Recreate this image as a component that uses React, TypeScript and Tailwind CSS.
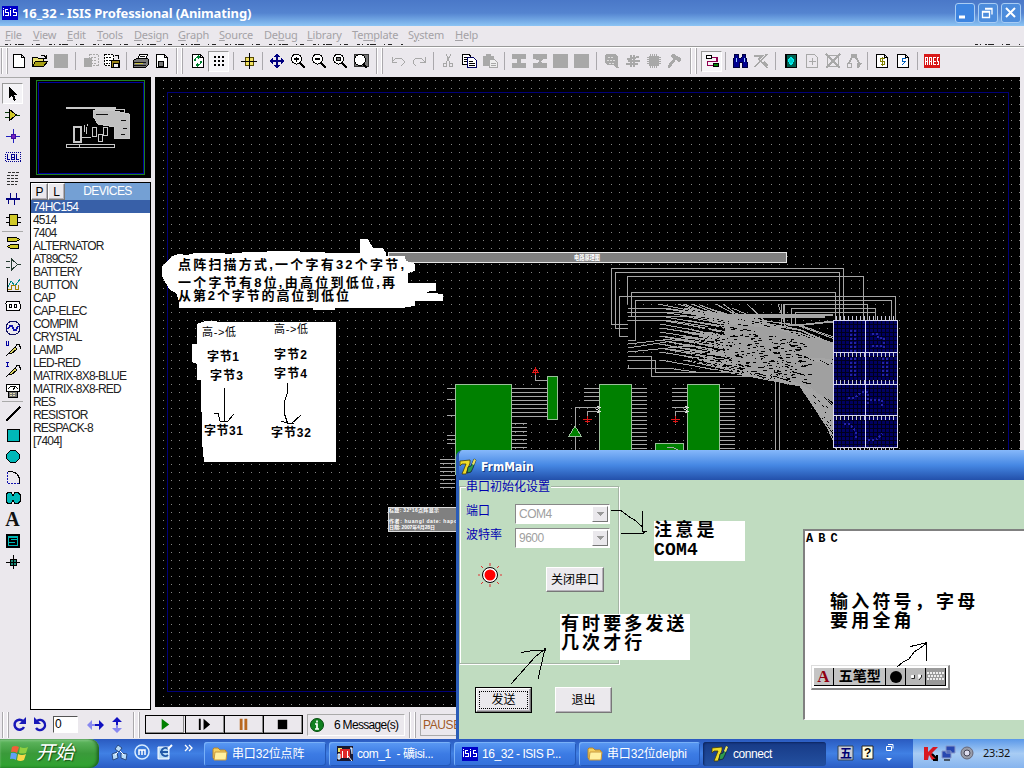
import type { ReactNode } from "react";

const UI = "font-['Noto_Sans','Noto_Sans_CJK_SC',sans-serif]";
const CJK = "font-['Liberation_Sans','Noto_Sans_CJK_SC',sans-serif]";

function Ic({ children, s = 16 }: { children: ReactNode; s?: number }) {
  return (
    <svg width={s} height={s} viewBox="0 0 16 16" fill="none" stroke="#000" shapeRendering="crispEdges" className="shrink-0">
      {children}
    </svg>
  );
}

/* ---------- toolbar glyphs ---------- */
const sheet = <path d="M2.5 1.5h8l3 3v10h-11zM10.5 1.5v3h3" fill="#fff" />;
const G = "#a8a8a8";
const icons: Record<string, ReactNode> = {
  new: <Ic>{sheet}</Ic>,
  open: <Ic><path d="M.5 13.5v-9h5l1 1h5v3" fill="#e8e070" /><path d="M.5 13.5l3-5h12l-4 5z" fill="#a8a018" /><path d="M9 2.5h3l2 2M14.5 2v3h-3" /></Ic>,
  save: <Ic><path d="M1 1h14v14H1z" fill={G} stroke="none" /></Ic>,
  imp: <Ic><path d="M6.5 1.5h9v11h-9zM8 4h6M8 7h6M8 10h6" stroke={G} strokeDasharray="2 1" /><path d="M1 5h8v9H1z" fill={G} stroke="none" /></Ic>,
  exp: <Ic><path d="M.5 1.5h9v11h-9z" fill="#fff" strokeDasharray="2 1" /><path d="M2 4h6M2 7h5M2 10h4" strokeDasharray="2 1" /><path d="M11 2h3v4" /><path d="M7.5 7.5h8v7h-8z" fill="#9a8418" /><path d="M9 10h5v4H9z" fill="#eee" /></Ic>,
  print: <Ic><path d="M4.5 6.5l2-5h8l-2 5" fill="#fff" /><path d="M.5 7.5l3-2h11l1 1v5l-3 3h-12z" fill="#777" /><path d="M1 9.5h12M1 12h12M7 3h5" stroke="#111" /><path d="M2 10.5h8" stroke="#c8c040" /></Ic>,
  pdoc: <Ic>{sheet}<path d="M4 8h5v5H4z" fill="#777" /></Ic>,
  refresh: <Ic>{sheet}<path d="M5 8V6l2-2h2M8 2l2 2-2 2M11 8v2l-2 2H7M8 10l-2 2 2 2" stroke="#008030" strokeWidth="1.2" /></Ic>,
  grid: <span className="flex h-[21px] w-[21px] items-center justify-center border border-b-white border-l-[#999] border-r-white border-t-[#999] bg-[#f6f5f8]"><Ic>{[3, 7, 11].map((y) => <path key={y} d={`M3 ${y + 1}h2M7 ${y + 1}h2M11 ${y + 1}h2`} strokeWidth="2" />)}</Ic></span>,
  origin: <Ic><path d="M8.500 0v16M0 8.500h16" /><path d="M4.500 4.500h8v8h-8z" stroke="#5a4c00" fill="#f0e060" /><path d="M8.500 4v9M4 8.500h9" /></Ic>,
  move: <Ic><path d="M8 0l3 4H9v3h3V5l4 3-4 3V9H9v3h2l-3 4-3-4h2V9H4v2L0 8l4-3v2h3V4H5z" fill="#000080" stroke="none" /><path d="M7 3h2v10H7zM3 7h10v2H3z" fill="#000080" stroke="none" /></Ic>,
  zin: <Ic><circle cx="6.500" cy="6" r="5" fill="#fff" /><path d="M4 6h5M6.500 3.500v5" strokeWidth="1.500" /><path d="M10 10l5 5" strokeWidth="2.500" /></Ic>,
  zout: <Ic><circle cx="6.500" cy="6" r="5" fill="#fff" /><path d="M4 6h5" strokeWidth="1.500" /><path d="M10 10l5 5" strokeWidth="2.500" /></Ic>,
  zall: <Ic><circle cx="6.500" cy="6" r="5" fill="#fff" /><path d="M4.500 4.500h4v3h-4z" fill="#777" /><path d="M10 10l5 5" strokeWidth="2.500" /></Ic>,
  zarea: <Ic><path d="M1 1h14v12H1z" fill="#777" stroke="#333" /><circle cx="7" cy="7" r="5.500" fill="#fff" /><path d="M10 11l4 4" strokeWidth="2.500" /></Ic>,
  undo: <Ic><path d="M2 4v5h5M2 9l4-4h5l3 3v2l-3 3" stroke={G} /></Ic>,
  redo: <Ic><path d="M14 4v5H9M14 9l-4-4H5L2 8v2l3 3" stroke={G} /></Ic>,
  cut: <Ic><path d="M6 1l4 9M11 1L6 10" stroke={G} /><circle cx="5" cy="12" r="2" stroke={G} /><circle cx="11" cy="12" r="2" stroke={G} /></Ic>,
  copy: <Ic><path d="M1.500 1.500h7l1 2v8h-8z" fill="#fff" /><path d="M3 4.500h4M3 6.500h4M3 8.500h3" /><path d="M6.500 4.500h6l3 3v7h-9z" fill="#fff" stroke="#000060" /><path d="M8 8.500h4M8 10.500h6M8 12.500h6" /></Ic>,
  paste: <Ic><path d="M1 3h3V1h5v2h3v10H1z" fill={G} stroke="none" /><path d="M7.500 6.500h5l3 3v5h-8z" fill="#eee" stroke={G} /><path d="M9 10.500h5M9 12.500h5" stroke={G} /></Ic>,
  b1: <Ic><path d="M1 1h14v5H10v4h5v5H1v-5h5V6H1z" fill={G} stroke="none" /></Ic>,
  b2: <Ic><path d="M1 1h14v5h-3l-4 3 4 1h3v5H1v-5h4l2-1V7L1 6z" fill={G} stroke="none" /></Ic>,
  b3: <Ic><path d="M0 1h15v14H0z" fill={G} stroke="none" /></Ic>,
  pick: <Ic><path d="M2 1h9l3 3v8l1 3h-3l-2-3H3L1 9V4z" fill={G} stroke="none" /><path d="M4 4.500h5M3 7.500h8M5 10.500h5" stroke="#ddd" strokeDasharray="2 1" /></Ic>,
  pin: <Ic><path d="M6 2v12M9 2v12M2 6l12-2M1 11h12M3 8h12" stroke={G} strokeWidth="2" /></Ic>,
  chip: <Ic><path d="M3 3h10v10H3z" fill={G} stroke="none" /><path d="M4.500 1v14M6.500 1v14M8.500 1v14M10.500 1v14M1 4.500h14M1 6.500h14M1 8.500h14M1 10.500h14" stroke={G} /></Ic>,
  ham: <Ic><path d="M6 1l8 5-2 3-3-3-7 9-1-2 6-7-3-3z" fill={G} stroke={G} /></Ic>,
  wire: <span className="flex h-[21px] w-[21px] items-center justify-center border border-b-white border-l-[#999] border-r-white border-t-[#999] bg-[#f6f5f8]"><Ic><path d="M7 4.500h6v4H3.500v4h6" stroke="#900050" strokeWidth="1.500" /><path d="M2.500 2.500h5v3h-5z" fill="#fff" /><path d="M9.500 10.500h5v3h-5z" fill="#008000" /></Ic></span>,
  find: <Ic><path d="M3 1h3v3l2 2 2-2V1h3l2 8v5h-5V9H7v5H1V9z" fill="#000090" stroke="#000040" /><path d="M4.500 5v4M12.500 5v4" stroke="#9cf" /></Ic>,
  tool: <Ic><path d="M1 3h8L6 6l8 9M14 1L2 14M11 9l4 4" stroke={G} strokeWidth="1.500" /></Ic>,
  des: <Ic><path d="M2.500 1.500h11v13h-11z" fill="#006050" /><path d="M8 4l3 4-3 4-3-4z" fill="#0cc" stroke="#0ee" /><path d="M3 1v14" strokeWidth="2" /></Ic>,
  add: <Ic><path d="M2.500 1.500h8l3 3v10h-11zM8.500 5v7M5 8.500h7" stroke={G} /></Ic>,
  del: <Ic><path d="M2.500 2.500h11v11h-11zM1 1l14 14M15 1L1 15" stroke={G} strokeWidth="1.500" /></Ic>,
  hier: <Ic><path d="M1.500 10.500h4v4h-4zM3 10l3-6h4l4 8M5 2h5v4M12 10v5M15 10l-3 5" stroke={G} strokeWidth="1.500" /></Ic>,
  bill: <Ic>{sheet}<path d="M10.500 5.500h-4v3h4v3h-4M8.500 4v9" stroke="#808000" /></Ic>,
  erc: <Ic>{sheet}<path d="M11 5.500H7.500v3h3l-4 4" stroke="#0060c0" /></Ic>,
  ares: <Ic><path d="M0 1h16v14H0z" fill="#d81818" stroke="none" /><path d="M1.500 12V4.500h2V12M1.500 8.500h2M5.500 12V4.500h2v4h-2M7.500 9v3M12 4.500H9.500v7H12M9.500 8.500H12M15 4.500h-1.500v4h1v3H13" stroke="#fff" /></Ic>,
};

const sep = (w: string) => <span className={`flex shrink-0 justify-center ${w}`}><span className="h-[18px] w-px bg-[#aaa8ac]" /></span>;
const grip = (w: string) => (
  <span className={`flex h-[26px] shrink-0 items-stretch justify-center ${w}`}>
    <span className="w-px bg-[#aaa8ac]" /><span className="w-px bg-white" />
    <span className="ml-[3px] w-px bg-white" /><span className="w-px bg-[#aaa8ac]" />
  </span>
);
function Cells({ names }: { names: string }) {
  return <>{names.split(" ").map((n, i) => <span key={i} className="flex w-[21px] shrink-0 justify-center">{icons[n]}</span>)}</>;
}

/* ---------- left mode icons ---------- */
const T = "#00b8b8";
const modes: ReactNode[] = [
  <span className="flex h-[21px] w-[21px] items-center justify-center border border-b-white border-l-[#999] border-r-white border-t-[#999] bg-[#f4f3f6]"><Ic><path d="M4 1v11l3-2 2 5 2-1-2-5h3z" fill="#000" stroke="none" /></Ic></span>,
  <Ic><path d="M4.500 2.500v11l7-5.500z" fill="#d0c828" /><path d="M0 5.500h4M0 10.500h4M11 8.500h4" stroke="#0a3a0a" /></Ic>,
  <Ic><path d="M8.500 1v14M1 8.500h14" stroke="#2020c0" /><path d="M6.500 6.500h4v4h-4z" fill="#7020c0" stroke="#4010a0" /></Ic>,
  <Ic><path d="M.5 3.500h15v9H.5z" stroke="#000090" strokeDasharray="1 1" /><path d="M2.500 5v5.500H5M6.500 5.500h3v5h-3zM7 8.500h2M11.500 5v5.500H14" stroke="#000090" /></Ic>,
  <Ic><path d="M3 2.500h11M2 5.500h12M2 8.500h11M2 11.500h12M2 14.500h10" stroke="#333" strokeDasharray="3 1" /></Ic>,
  <Ic><path d="M1 8h14" stroke="#000080" strokeWidth="2" /><path d="M5.500 2v6M11.500 2v6M3.500 8v5M9.500 8v6" stroke="#000080" /></Ic>,
  <Ic><path d="M4.500 2.500h8v11h-8z" fill="#d0c828" /><path d="M1 5.500h3M1 10.500h3M13 5.500h3M13 10.500h3" /></Ic>,
  null,
  <Ic><path d="M2.500 2.500h9l3 2-3 2h-9zM5.500 9.500h8v4h-8l-3-2z" fill="#d0c828" /></Ic>,
  <Ic><path d="M6.500 3v11l6-5.500zM1 5.500h4M1 11.500h4M13 8.500h3" stroke="#243a30" /></Ic>,
  <Ic><path d="M2.500 1v13.500H16" /><path d="M3 10l3-6 4 5 5-7" stroke="#088" /><path d="M3 12.500h3v-4h4v4h3v-5" stroke="#a08000" /></Ic>,
  <Ic><rect x="1" y="3.500" width="14" height="9" rx="2" fill="#fff" /><path d="M4.500 6.500h2v3h-2zM9.500 6.500h2v3h-2z" /></Ic>,
  <Ic><circle cx="8" cy="8" r="7" stroke="#101060" /><path d="M3 9l2-3h2l2 4h2l2-4" stroke="#1010b0" strokeWidth="1.500" /></Ic>,
  <Ic><path d="M1.500 0v4h2V0" stroke="#0000a0" /><path d="M1 15l4-4M8 10l4-7h2l2 5" /><path d="M4 12l6-6 2 2-6 5z" fill="#d8d060" /></Ic>,
  <Ic><path d="M1 .500h3M2.500 0v5M1 4.500h3" stroke="#0000a0" /><path d="M1 15l4-4M8 10l4-7h2l2 5" /><path d="M4 12l6-6 2 2-6 5z" fill="#d8d060" /></Ic>,
  <Ic><path d="M1.500 1.500h13v7h-13z" fill="#fff" /><path d="M3 6l3-3h4l3 3M8 7l2-3" /><path d="M3.500 8.500h9v6h-9z" fill="#777" /><path d="M5 10.500h6M5 12.500h6" stroke="#e8e0b0" strokeDasharray="2 1" /></Ic>,
  null,
  <Ic><path d="M1 15L15 1" strokeWidth="1.500" /></Ic>,
  <Ic><path d="M2.500 2.500h12v12h-12z" fill={T} /></Ic>,
  <Ic><path d="M5.500 2.500h5l4 4v4l-4 4h-5l-4-4v-4z" fill={T} /></Ic>,
  <Ic><path d="M2.500 2.500v12h12" stroke="#1010b0" strokeDasharray="2 1" /><path d="M3 2.500h4q7 2 7.500 8v4" /></Ic>,
  <Ic><path d="M1 4.500l2-2h3l2 3 2-3h3l2 2v7l-2 2h-3l-2-3-2 3H3l-2-2z" fill={T} /></Ic>,
  <span className="font-['Liberation_Serif',serif] text-[20px] font-bold leading-[20px] text-[#111]">A</span>,
  <Ic><path d="M2 2h12v12H2z" fill={T} strokeWidth="2" /><path d="M12 5.500H5V8h6v3H4" strokeWidth="1.500" /></Ic>,
  <Ic><path d="M8.500 1v14M1 8.500h14" /><path d="M5.500 5.500h6v6h-6z" fill="#1a8a78" /><path d="M8.500 5v7M5 8.500h7" /></Ic>,
];

const devices = ["74HC154", "4514", "7404", "ALTERNATOR", "AT89C52", "BATTERY", "BUTTON", "CAP", "CAP-ELEC", "COMPIM", "CRYSTAL", "LAMP", "LED-RED", "MATRIX-8X8-BLUE", "MATRIX-8X8-RED", "RES", "RESISTOR", "RESPACK-8", "[7404]"];

/* ---------- schematic ---------- */
const seq = (n: number, a: number, d: number) => Array.from({ length: n }, (_, i) => a + i * d);
const rnd = (i: number) => { const v = Math.sin(i * 127.1 + 11.7) * 43758.5453; return v - Math.floor(v); };
const W = "#a6a6a6";

function fan() {
  let d = "";
  for (let i = 0; i < 105; i++) {
    const row = i % 15;
    const x = 660 + Math.floor(rnd(i) * 4.2) * 24;
    const y = 308 + row * 4;
    const t = 336 + row * 4 + rnd(i + 400) * 24;
    const mid = Math.min(y * 0.4 + t * 0.6, 386);
    d += `M${x} ${y}L800 ${mid}L833 ${Math.min(t + (row > 9 ? 22 : 0), 436)}`;
  }
  return d;
}
function speckle() {
  let d = "";
  for (let i = 0; i < 330; i++) {
    const x = Math.round(690 + rnd(i + 900) * 118);
    const f = (x - 690) / 118;
    const y = Math.round(318 + f * 24 + rnd(i + 1900) * (48 - f * 6)) + 0.5;
    d += `M${x} ${y}h${1 + Math.floor(rnd(i + 77) * 4)}`;
  }
  return d;
}
const FAN = fan();
const SPK = speckle();
const LED = "M851 330v22M855 330v22M851 358v18M855 358v18M872 334h6v4h6v12M872 346h12M883 358v18M887 358v18M848 398h6l8-6h6v12M870 400h12v6M844 424h6l6 8v6M868 440h8l6-6";

function Schematic() {
  return (
    <svg width="865" height="630" viewBox="155 77 865 630" className="block shrink-0 bg-black" fill="none" stroke={W} shapeRendering="crispEdges">
      <defs>
        <pattern id="dots" x="163" y="80" width="8" height="8" patternUnits="userSpaceOnUse"><rect width="1" height="1" fill="#858585" stroke="none" /></pattern>
        <pattern id="leds" x="834" y="321" width="4" height="4" patternUnits="userSpaceOnUse"><rect width="3" height="3" fill="#000062" stroke="none" /></pattern>
      </defs>
      <rect x="163" y="80" width="857" height="626" fill="url(#dots)" stroke="none" />
      <path d="M167.500 92.500h841v599h-841z" stroke="#000078" />
      <path d="M388.500 252.500h398v10h-398z" fill="#808080" stroke="#e8e8e8" />
      <text x="574" y="260" fontSize="7" fontWeight="bold" fill="#fff" stroke="none" textLength="26" lengthAdjust="spacingAndGlyphs" className={CJK}>电路原理图</text>
      {/* wiring */}
      <path d="M627.500 324.500h-16V268.500h232v52M627.500 328.500h-12V272.500h224v48M627.500 304V276.500h236v44M628 336.500h-8.500V296.500h276v24M628 340.500h7V300.500h256v20M631.500 317V292.500h204v28M783.500 320V304.500h84v16M791.500 325V308.500h84v12M795.500 325V312.500h80v8M628 356.500h23v20h120M628 360.500h27v12h60M628 365v3.500h42l30 4h65l10 4M775.500 376v74M779.500 378v72" />
      <path d="M628 308.500h40l40 6h20M628 312.500h50l50 6h20M628 316.500h105M628 320.500h40l40 6M628 344l62-7M628 348l70-11M628 352l60-6" />
      <path d="M658 304l60 12M678 304l40 12M684 304l36 14M692 304l40 16M700 305l40 16M716 304l40 22M723 304l30 22M747 304l22 22M752 308l18 18M778 304l8 24M781 304v22M784 304v22" />
      <path d="M705 314.500h128M715 316.500h110" strokeWidth="2" />
      <path d={FAN} />
      <path d="M725 324L772 328 800 336 833 342V359L800 357 833 366V402L812 390 785 377 750 370 725 356z" fill="#a0a0a0" stroke="none" />
      <path d={SPK} stroke="#000" />
      <path d="M770 328l63-7M795 326l38-4M800 386l33 30M806 388l27 40M810 390l23 50M812 390l21 38M814 390l19 30M808 384l25 34" />
      {/* led matrices */}
      <path d="M833 320h64v127h-64z" fill="#00001c" />
      <path d="M833 320h64v127h-64z" fill="url(#leds)" />
      <path d={LED} stroke="#2424a4" strokeWidth="2" strokeDasharray="2 2" />
      <path d="M833.500 320.500h64v127h-64zM865.500 320v127M833 352.500h64M833 384.500h64M833 415.500h64" stroke="#d8d8f0" />
      <path d={seq(8, 836, 4).concat(seq(7, 869, 4)).map((x) => `M${x}.5 316v4M${x}.5 353v4M${x}.5 380v4M${x}.5 416v4M${x}.5 447v3`).join("")} stroke="#c8c8d8" />
      {/* chips */}
      <g fill="#008000" stroke="#9ac09a">
        <path d="M455.500 384.500h56v90h-56zM547.500 376.500h10v43h-10zM599.500 384.500h32v70h-32zM687.500 384.500h32v70h-32zM655.500 443.500h28v14h-28z" />
        <path d="M575 426l6 10h-12z" />
      </g>
      <path d={seq(8, 388, 4).map((y) => `M512 ${y}.5h36`).join("") + seq(8, 423, 4).map((y) => `M512 ${y}.5h15`).join("") + seq(17, 388, 4).map((y) => `M632 ${y}.5h15M720 ${y}.5h15`).join("") + seq(4, 388, 4).map((y) => `M584 ${y}.5h15M672 ${y}.5h15`).join("")} />
      <path d="M447 388.500h8M447 399.500h8M447 415.500h8M447 435.500h8M447 439.500h8M447 443.500h8M440 459.500h15M440 463.500h15M440 467.500h15M440 471.500h15M440 475.500h15M440 479.500h15M440 483.500h15M440 487.500h15" />
      <path d="M535.500 373v7.500h12M575.500 426v-18.500h24M575.500 436v20M599 411.500h-11.500v6M687 411.500h-11.500v6M672 407.500h15M667 448l5-1 6 3" />
      <path d="M597 406l3 1.500-3 2 3 2-3 1M685 406l3 1.500-3 2 3 2-3 1" stroke="#ddd" />
      <path d="M535.500 375v-6M533 372l2.500-4 2.500 4zM583 419.500h9M585 421.500h5M587.500 416v7M671 419.500h9M673 421.500h5M675.500 416v7" stroke="#e01818" />
      {/* title block */}
      <path d="M388.500 507.500h80v24h-80z" fill="#808080" stroke="#ddd" />
      <g fill="#fff" stroke="none" fontSize="5" fontWeight="bold" className={CJK}>
        <text x="389" y="512" textLength="50">标题: 32*16点阵显示</text>
        <text x="389" y="523" textLength="68">作者: huangl date: hapo</text>
        <text x="389" y="529" textLength="46">日期: 2007年4月28日</text>
      </g>
      {/* painted notes */}
      <g fill="#fff" stroke="none">
        <path d="M172 256l7-2 8 1 8-2h28l4 1 20-2 40-1 50 2h23v-14h8l5 9h10l3 5 0 3 19 0 1 5 9 3v7l-7 2v10h28v8l-14 1 21 2v7h-28v5l-8 1-4 1H335v2h-22v-2H179v-7l-3-8-6-3-6-10-2-4v-10l4-4z" />
        <path d="M197 324l8-3h12v1h119v140H204l-2-20-1-62h-4v-16l-5-2v-18h5z" />
      </g>
      <g fill="#000" stroke="none" fontWeight="bold" fontSize="13" className={CJK}>
        <text x="178" y="269" textLength="226">点阵扫描方式,一个字有32个字节,</text>
        <text x="178" y="287" textLength="217">一个字节有8位,由高位到低位,再</text>
        <text x="178" y="300" textLength="171">从第2个字节的高位到低位</text>
        <text x="202" y="336" fontWeight="normal" fontSize="11" textLength="34">高-&gt;低</text>
        <text x="274" y="333" fontWeight="normal" fontSize="11" textLength="34">高-&gt;低</text>
        <g fontSize="12">
          <text x="207" y="361" textLength="32">字节1</text>
          <text x="274" y="359" textLength="33">字节2</text>
          <text x="210" y="380" textLength="33">字节3</text>
          <text x="274" y="378" textLength="33">字节4</text>
          <text x="204" y="435" textLength="39">字节31</text>
          <text x="271" y="437" textLength="40">字节32</text>
        </g>
      </g>
      <path d="M224.500 388v34M214 413h4l2 8h8l6-7M287.500 383v9l-3 10v12l3 9h6M281 421l10 3 10-9" stroke="#000" />
    </svg>
  );
}

/* ---------- shared pictograms ---------- */
const Isis = () => (
  <svg width="16" height="14" viewBox="0 0 16 14" fill="none" stroke="#fff" shapeRendering="crispEdges" className="shrink-0">
    <path d="M0 0h16v14H0z" fill="#0000c8" stroke="none" />
    <path d="M1.500 4v6M1.500 1.500v1M6 3.500H3.500v3H6v3H3M8.500 4v6M8.500 1.500v1M14 3.500h-3v3h3v3h-3" />
  </svg>
);
const Seven = () => (
  <svg width="18" height="18" viewBox="0 0 18 18" className="shrink-0">
    <path d="M1 3l10-1v3L7 16H3l4-10H3L1 8z" fill="#f0dc28" stroke="#443c08" strokeWidth=".8" />
    <path d="M9 9l3-1 3-7 2 1-3 8-2 4-4 1z" fill="#2e9a4e" stroke="#123" strokeWidth=".8" />
    <path d="M13 6l2-5 2 1-2 5z" fill="#f0e060" />
  </svg>
);
const Folder = () => (
  <svg width="16" height="16" viewBox="0 0 16 16" className="shrink-0"><path d="M1 3l1-1h4l2 2h5l1 1v8H2L1 12z" fill="#f4d060" stroke="#b8862c" /><path d="M3 6h12l-1 8H2z" fill="#fff0a0" stroke="#c8983c" /></svg>
);

function Task({ icon, text, w, active, tight }: { icon: ReactNode; text: string; w: string; active?: boolean; tight?: boolean }) {
  return (
    <div className={`flex h-[24px] shrink-0 items-center gap-[4px] overflow-hidden whitespace-pre rounded-[3px] pl-[8px] text-[12px] text-white ${w} ${active ? "bg-gradient-to-b from-[#173a86] to-[#2350a0] shadow-[inset_1px_1px_2px_#0c2560]" : "bg-gradient-to-b from-[#5b9af4] via-[#3c7be4] to-[#3370da] shadow-[inset_1px_1px_0_#78b0f8,inset_-1px_-1px_0_#2458b8]"}`}>
      {icon}<span className={tight ? "tracking-[-0.45px]" : "tracking-[-0.15px]"}>{text}</span>
    </div>
  );
}

function Combo({ v }: { v: string }) {
  return (
    <div className="flex h-[20px] w-[95px] border border-b-white border-l-[#888] border-r-white border-t-[#888] bg-white p-px text-[12px] leading-[16px] text-[#a0a0a0]">
      <span className="w-[75px] pl-[2px] tracking-[-0.5px]">{v}</span>
      <span className="flex w-[16px] items-center justify-center border border-b-[#777] border-l-white border-r-[#777] border-t-white bg-[#eae8ec]">
        <svg width="7" height="4" shapeRendering="crispEdges"><path d="M0 0h7L3.500 4z" fill="#999" /></svg>
      </span>
    </div>
  );
}

const raised = "border border-b-[#777] border-l-white border-r-[#777] border-t-white bg-[#ebe9ed] shadow-[inset_-1px_-1px_0_#b4b0b8]";

function FrmMain() {
  return (
    <section className={`absolute bottom-[29px] left-[456px] right-0 top-[450px] flex flex-col overflow-hidden rounded-tl-[7px] border-l-[3px] border-[#2a5cb8] bg-[#c0dcc0] ${CJK}`}>
      <header className="flex h-[30px] shrink-0 items-center gap-[4px] bg-gradient-to-b from-[#86b8fa] via-[#4688e4] to-[#2350aa] pt-[4px]">
        <Seven />
        <span className="font-['DejaVu_Sans_Condensed','DejaVu_Sans',sans-serif] text-[12px] font-bold text-white [text-shadow:1px_1px_0_#163a80]">FrmMain</span>
      </header>
      <div className="flex grow">
        <div className="w-[344px] shrink-0">
          <div className="h-[184px] w-[160px] pt-[6px]">
            <div className="h-[178px] border border-[#a4b4a4] pl-[6px] shadow-[1px_1px_0_#fff,inset_1px_1px_0_#fff]">
              <div className="mt-[-7px] w-[85px] bg-[#c0dcc0] text-[12px] leading-[14px] text-[#0000b0]">串口初始化设置</div>
              <div className="mt-[10px] flex text-[12px] leading-[15px] text-[#0000b0]"><span className="w-[49px]">端口</span><Combo v="COM4" /></div>
              <div className="mt-[4px] flex text-[12px] leading-[14px] text-[#0000b0]"><span className="w-[49px] whitespace-nowrap">波特率</span><Combo v="9600" /></div>
              <div className="mt-[14px] flex items-start">
                <svg width="26" height="26" viewBox="0 0 26 26" className="ml-[11px]">
                  <circle cx="13" cy="13" r="7.500" fill="#fff" stroke="#000" /><circle cx="13" cy="13" r="5.500" fill="#f00" />
                  <path d="M13 1v3M13 22v3M1 13h2M23 13h2M4 4l2 2M20 20l2 2M22 4l-2 2M6 20l-2 2" stroke="#e03030" />
                </svg>
                <div className={`ml-[43px] mt-[5px] flex h-[25px] w-[58px] items-center justify-center whitespace-nowrap text-[12px] ${raised}`}>关闭串口</div>
              </div>
            </div>
          </div>
          <div className="flex pl-[16px] pt-[23px] text-[12px]">
            <div className="h-[26px] w-[57px] border border-black"><div className={`h-full p-[2px] ${raised}`}><div className="flex h-full items-center justify-center border border-dotted border-black">发送</div></div></div>
            <div className={`ml-[23px] flex h-[26px] w-[57px] items-center justify-center ${raised}`}>退出</div>
          </div>
        </div>
        <div className="mt-[49px] flex h-[191px] grow flex-col border-b border-l-2 border-t-2 border-b-white border-l-[#808080] border-t-[#808080] bg-white">
          <div className="pl-px pt-px font-['Liberation_Mono',monospace] text-[12px] font-bold leading-[14px] tracking-[-1.1px]">A B C</div>
          <div className="ml-[25px] mt-[47px] whitespace-pre text-[18px] font-bold leading-[19px] tracking-[3.2px]">{"输入符号，字母\n要用全角"}</div>
          <div className="ml-[6px] mt-[34px] flex h-[25px] w-[139px] shrink-0 border-b-2 border-l border-r-2 border-t border-b-[#888] border-l-[#ddd] border-r-[#888] border-t-[#ddd] bg-white p-[2px]">
            <span className="flex w-[20px] items-center justify-center border-b border-r border-black bg-[#c4c4c4] font-['Liberation_Serif',serif] text-[17px] font-bold text-[#900010]">A</span>
            <span className="flex w-[53px] items-center justify-center whitespace-nowrap border-b border-r border-black bg-[#c4c4c4] text-[14px] font-bold">五笔型</span>
            <span className="flex w-[20px] items-center justify-center border-b border-r border-black bg-[#b8b8b8]"><span className="h-[12px] w-[12px] rounded-full bg-black" /></span>
            <span className="flex w-[20px] items-center justify-center border-b border-r border-black bg-[#b8b8b8]"><svg width="12" height="8"><path d="M1.500 2.500h2v2h-2zM8 2h2.500v2L8.500 6" fill="#fff" stroke="#fff" /><path d="M4.500 2v3.500h-3M11.500 2v2L9 7" stroke="#222" fill="none" /></svg></span>
            <span className="flex w-[20px] items-center justify-center border-b border-r border-black bg-[#999]"><svg width="17" height="11"><path d="M0 2h17M1 5h15M0 8h17" stroke="#eee" strokeWidth="2" strokeDasharray="2 1" /></svg></span>
          </div>
        </div>
      </div>
      {/* callouts lying over the form */}
      <div className="absolute left-[195px] top-[71px] h-[40px] w-[91px] whitespace-pre bg-white pt-px font-['Liberation_Mono','Noto_Sans_CJK_SC',monospace] text-[18px] font-bold leading-[19px]"><span className="tracking-[3.200px]">注意是</span>{"\n"}<span className="text-[18px] tracking-[0.200px]">COM4</span></div>
      <div className="absolute left-[101px] top-[164px] h-[46px] w-[130px] whitespace-pre bg-white pt-px pl-px text-[18px] font-bold leading-[19px] tracking-[3.100px]">{"有时要多发送\n几次才行"}</div>
      <svg className="absolute left-0 top-0" width="565" height="288" viewBox="459 450 565 288" fill="none" stroke="#000" shapeRendering="crispEdges">
        <path d="M611 510.500h10l9 7 4 2 8 7M642.500 511v20h4M621 533.500h22l2-2M511 684l24-27 10-8M521 652.500l12-2h12v-3M545 648l-3 14-4 17M897 667l6-5 6-3 5-7 5-3 8-6M910 646.500l5-1 12-3M926.500 643v18" />
      </svg>
    </section>
  );
}

const menus: [string, string][] = [["File", "w-[28px]"], ["View", "w-[34px]"], ["Edit", "w-[30px]"], ["Tools", "w-[37px]"], ["Design", "w-[44px]"], ["Graph", "w-[41px]"], ["Source", "w-[45px]"], ["Debug", "w-[43px]"], ["Library", "w-[45px]"], ["Template", "w-[56px]"], ["System", "w-[47px]"], ["Help", "w-[30px]"]];
const underline: Record<string, number> = { Debug: 2, Template: 2, System: 1 };

export default function App() {
  return (
    <div className={`relative flex h-[768px] w-[1024px] flex-col overflow-hidden bg-[#ebe8ed] text-black ${CJK}`}>
      <header className="flex h-[26px] shrink-0 items-center bg-gradient-to-b from-[#4a78c8] via-[#5484d0] to-[#8cc4f4] pl-[2px]">
        <Isis />
        <span className={`ml-[4px] pt-px text-[13px] font-bold tracking-[-0.12px] text-white ${UI}`}>16_32 - ISIS Professional (Animating)</span>
        <div className="ml-auto flex gap-[3px] pr-[3px]">
          {["M4 14h6", "M7 5.500h7v6M4.500 8.500h7v6h-7zM7 6h7M4 9h7", "M5 5l9 9M14 5l-9 9"].map((d, i) => (
            <svg key={i} width="20" height="20" viewBox="0 0 20 20" fill="none"><rect x=".5" y=".5" width="19" height="19" rx="2.500" fill={i === 0 ? "#3c84e0" : "#4c8cdc"} stroke="#a8ccf4" /><path d={d} stroke="#fff" strokeWidth={i === 1 ? 1.3 : i ? 2 : 3} /></svg>
          ))}
        </div>
      </header>
      <nav className={`flex h-[18px] shrink-0 items-center pl-[5px] text-[11px] tracking-[-0.2px] text-[#a4a2a6] ${UI}`}>
        {menus.map(([m, w]) => { const u = underline[m] ?? 0; return <span key={m} className={w}>{m.slice(0, u)}<u>{m[u]}</u>{m.slice(u + 1)}</span>; })}
      </nav>
      <svg width="1024" height="3" className="block shrink-0" shapeRendering="crispEdges"><path d="M5 .5h398M975 .5h45" stroke="#222" strokeDasharray="3 2 1 4 2 1 6 8 1 3 4 9" /><path d="M0 2.500h1024" stroke="#999" /></svg>
      <div className="flex h-[30px] shrink-0 items-center border-t border-white pb-[3px]">
        {grip("w-[8px]")}<Cells names="new open save" />{sep("w-[9px]")}<Cells names="imp exp" />{sep("w-[8px]")}<Cells names="print pdoc" />{grip("w-[15px]")}
        <Cells names="refresh grid" />{sep("w-[9px]")}<Cells names="origin" />{sep("w-[7px]")}<Cells names="move zin zout zall zarea" />{grip("w-[16px]")}
        <Cells names="undo redo" />{sep("w-[8px]")}<Cells names="cut copy paste" />{sep("w-[8px]")}<Cells names="b1 b2 b3 b3" />{sep("w-[9px]")}<Cells names="pick pin chip ham" />{grip("w-[16px]")}
        <Cells names="wire" />{sep("w-[7px]")}<Cells names="find tool" />{sep("w-[9px]")}<Cells names="des add del hier" />{sep("w-[7px]")}<Cells names="bill erc" />{sep("w-[8px]")}<Cells names="ares" />
      </div>
      <div className="flex h-[633px] shrink-0">
        <aside className="flex w-[30px] shrink-0 flex-col items-center border-t border-[#aaa] pr-[5px] pt-[5px]">
          {modes.map((m, i) => m ? <span key={i} className="flex h-[21.1px] shrink-0 items-center">{m}</span> : <span key={i} className="mb-px h-px w-[21px] shrink-0 bg-[#aaa]" />)}
        </aside>
        <div className="flex w-[121px] shrink-0 flex-col">
          <svg width="121" height="101" viewBox="30 77 121 101" className="block shrink-0 bg-black" fill="none" shapeRendering="crispEdges">
            <path d="M36.500 80.500h108v94h-108z" stroke="#208020" /><path d="M38.500 82.500h105v91h-105z" stroke="#0000a0" />
            <g stroke="#c8c8c8">
              <path d="M66 108h50" strokeWidth="2" /><path d="M66.500 144.500h48v3h-48zM79.500 144v3M73.500 126.500h8v16h-8zM74.500 127.500h6v14h-6zM84.500 125v7M87.500 126v-2M86.500 134v-7M92.500 127.500h4v9h-4zM103.500 127.500h4v8h-4zM98.500 134.500h4v7h-4zM82 137.500h9" />
              <path d="M94.500 109.500h30v3" />
              <path d="M93 110l22 1 14 3v24h-15v-11l-16-3-5-8z" fill="#c0c0c0" /><path d="M121 120.500h5M123 128.500h4M96 114.500h12M121 134.500h4" stroke="#111" />
            </g>
          </svg>
          <div className="mt-[4px] flex h-[528px] flex-col border border-black bg-white">
            <div className="flex h-[17px] shrink-0 bg-[#74a0d4] text-[12px] leading-[16px]">
              <span className={`w-[17px] text-center ${raised}`}>P</span><span className={`w-[17px] text-center ${raised}`}>L</span>
              <span className="grow text-center tracking-[-0.6px] text-white">DEVICES</span>
            </div>
            {devices.map((d, i) => <div key={d} className={`h-[13px] shrink-0 whitespace-nowrap pl-[2px] text-[12px] leading-[15px] tracking-[-0.8px] ${i ? "text-[#222]" : "bg-[#3860a8] text-white"}`}>{d}</div>)}
          </div>
        </div>
        <div className="ml-[4px] flex h-[630px] bg-black"><Schematic /></div>
      </div>
      <div className="flex h-[29px] shrink-0 items-center text-[12px]">
        {grip("w-[11px]")}
        <svg width="38" height="18" viewBox="0 0 38 18" fill="none" stroke="#1818b8" strokeWidth="2.500" className="ml-px shrink-0"><path d="M11 5a5 5 0 1 0 1 6" /><path d="M14 1v7H7z" fill="#1818b8" stroke="none" /><path d="M25 5a5 5 0 1 1-1 7" /><path d="M22 1v7h7z" fill="#1818b8" stroke="none" /></svg>
        <span className="ml-[3px] h-[17px] w-[25px] border border-b-white border-l-[#555] border-r-white border-t-[#555] bg-white pl-px leading-[14px]">0</span>
        <svg width="40" height="16" viewBox="0 0 40 16" className="ml-[9px] shrink-0"><path d="M0 8l5-5v4h4v2H5v4z" fill="#8888f0" /><path d="M17 8l-5-5v4H8v2h4v4z" fill="#1010c0" /><path d="M30 0l5 5h-4v3h-2V5h-4z" fill="#1010c0" /><path d="M30 16l5-5h-4V8h-2v3h-4z" fill="#8888f0" /></svg>
        {grip("w-[18px]")}
        <div className="flex border border-black">
          {[<path d="M16 3v12l8-6z" fill="#008000" />, <path d="M13 3h2v12h-2zM18 3v12l7-6z" fill="#000" />, <path d="M15 3h3v12h-3zM20 3h3v12h-3z" fill="#b86820" />, <path d="M14 4h10v10H14z" fill="#000" />].map((p, i) => (
            <span key={i} className={`h-[17px] w-[39px] ${i ? "border-l border-l-black" : ""}`}><svg width="38" height="17" viewBox="0 0 38 17" className="block border-b border-r border-[#888]">{p}</svg></span>
          ))}
        </div>
        <div className="ml-[4px] flex h-[22px] w-[98px] items-center gap-[10px] border border-b-white border-l-[#aaa] border-r-white border-t-[#aaa] pl-[2px]">
          <svg width="14" height="14" viewBox="0 0 14 14" className="shrink-0"><circle cx="7" cy="7" r="6.500" fill="#108020" stroke="#044a0c" /><path d="M7 2.500v2M5 6h2v5M5 11h4" stroke="#fff" strokeWidth="1.700" fill="none" /></svg>
          <span className="whitespace-nowrap tracking-[-0.7px]">6 Message(s)</span>
        </div>
        {grip("w-[15px]")}
        <div className="h-[22px] w-[90px] border border-[#aaa] pl-[2px] leading-[20px] tracking-[-0.4px] text-[#a05a28]">PAUSED</div>
      </div>
      <footer className={`flex h-[29px] shrink-0 items-center bg-gradient-to-b from-[#2a5ac0] via-[#4080e4] to-[#2a5cc4] ${CJK}`}>
        <div className="flex h-full w-[99px] shrink-0 items-center gap-[7px] rounded-r-[9px] bg-gradient-to-b from-[#62b862] via-[#3a9a3a] to-[#2fa42f] pb-px pl-[10px] shadow-[inset_-2px_0_3px_#1c6020,inset_0_2px_2px_#90d890]">
          <svg width="19" height="18" viewBox="0 0 19 18"><path d="M2 3q3-2 7 0L7 9Q4 7 1 8z" fill="#f06038" /><path d="M10 3q4 2 8 0l-2 6q-4 1-7 0z" fill="#90d040" /><path d="M1 9q3-1 6 1l-1 6q-3-2-6-1z" fill="#60a0f8" /><path d="M8 10q4 2 8 0l-2 6q-4 2-7 0z" fill="#f8d848" /></svg>
          <span className="text-[19px] italic leading-[20px] text-white [text-shadow:1px_1px_1px_#145014]">开始</span>
        </div>
        <svg width="105" height="24" viewBox="99 0 105 24" className="shrink-0" fill="none">
          <path d="M118 3l4 3-3 4-4-3zM112 12l5-2 1 6-5 2zM121 11l6 1-1 6-5-2z" fill="#b8dcf8" stroke="#284880" /><path d="M118 10l-3 3M120 9l4 4" stroke="#fff" />
          <circle cx="142" cy="10" r="7" stroke="#d8ecff" strokeWidth="1.500" fill="#3878d8" /><path d="M139 13V8h6v5M142 8v5" stroke="#fff" strokeWidth="1.500" />
          <path d="M158 5h11v12h-11z" fill="#b8dcf8" stroke="#fff" /><path d="M168 7a4 4 0 1 0 0 6M160 10h8" stroke="#2058a8" strokeWidth="2" /><path d="M168 7l4-4" stroke="#fff" strokeWidth="2" />
          <path d="M185 3l3 3-3 3M189 3l3 3-3 3" stroke="#fff" strokeWidth="1.300" />
        </svg>
        <div className="flex gap-[3px]">
          <Task icon={<Folder />} text="串口32位点阵" w="w-[122px]" />
          <Task icon={<svg width="16" height="16" viewBox="0 0 16 16" className="shrink-0"><path d="M0 0h16v15H0z" fill="#181830" /><path d="M1 2h4v4H1z" fill="#e8e060" /><path d="M4 12V4h3v8M9 12V4h3v8" stroke="#e02828" strokeWidth="2" fill="#fff" /><path d="M11 10l4 5M1 8h2v5H1zM13 2h2v6" stroke="#fff" fill="#58a0f0" /></svg>} text="com_1  - 礦isi..." w="w-[122px]" tight />
          <Task icon={<Isis />} text="16_32 - ISIS P..." w="w-[122px]" tight />
          <Task icon={<Folder />} text="串口32位delphi" w="w-[121px]" />
          <Task icon={<Seven />} text="connect" w="w-[123px]" active tight />
        </div>
        <svg width="87" height="24" viewBox="826 0 87 24" className="shrink-0" fill="none">
          <path d="M838 4h15v14h-15z" fill="#c8ccd8" stroke="#345" /><text x="840" y="16" fontSize="12" fontWeight="bold" fill="#000070" className={CJK}>五</text>
          <path d="M862 4h11v13h-11z" fill="#fffce0" stroke="#222" /><text x="864" y="15" fontSize="12" fontWeight="bold" fill="#000" className={CJK}>?</text>
          <path d="M888 2.500h5v4M886.500 4.500h5v4h-5z" stroke="#fff" /><path d="M886 16h6l-3 3z" fill="#fff" />
        </svg>
        <div className="flex h-full grow items-center bg-gradient-to-b from-[#5a98e8] via-[#a8ccf4] to-[#86b4ee] pl-[10px]">
          <svg width="54" height="18" viewBox="0 0 54 18"><path d="M1 2h4v5l5-5h5L9 8l4 7H9L6 10l-1 5H1z" fill="#d81820" /><path d="M9 9l5 5v-4M14 15h-4" stroke="#000" strokeWidth="2" fill="none" /><path d="M23 1h9v7h-9zM19 6h9v7h-9z" fill="#2848b0" stroke="#8898c8" /><path d="M21 15h6" stroke="#456" strokeWidth="2" /><circle cx="44" cy="8" r="6" fill="#989ca8" stroke="#667" /><circle cx="44" cy="8" r="3" fill="#dde" stroke="#445" /></svg>
          <span className={`ml-[6px] text-[11px] tracking-[-0.2px] text-[#111] ${UI}`}>23:32</span>
        </div>
      </footer>
      <FrmMain />
    </div>
  );
}
